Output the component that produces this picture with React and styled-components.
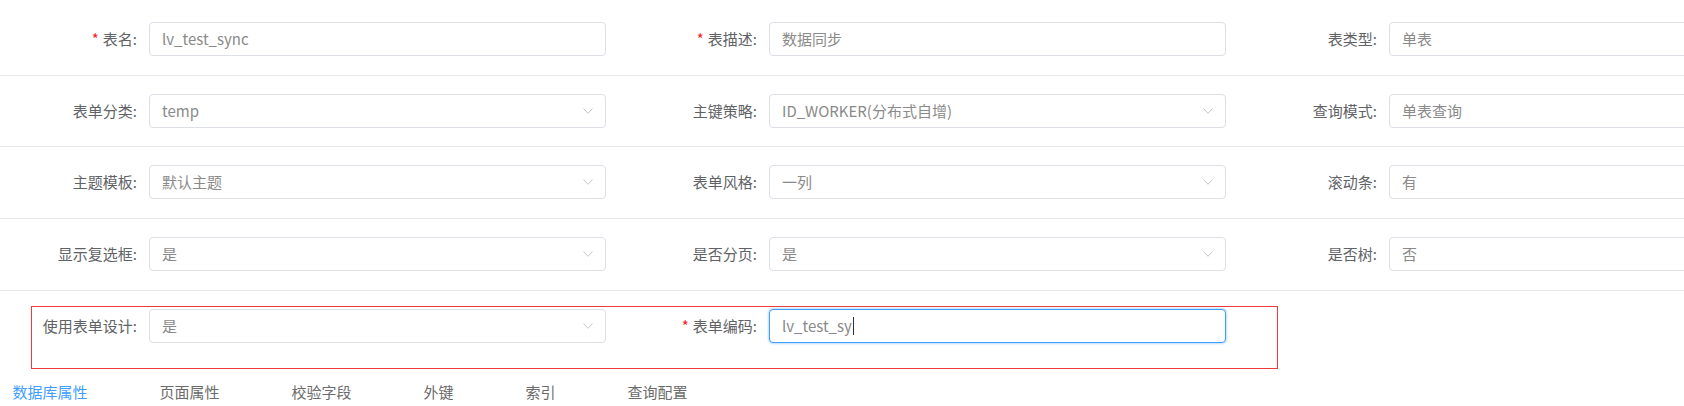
import React from "react";
import styled, { createGlobalStyle } from "styled-components";

const GlobalStyle = createGlobalStyle`
  html, body {
    margin: 0;
    padding: 0;
    background: #fff;
    overflow: hidden;
  }
  body {
    font-family: "Noto Sans CJK SC", "Liberation Sans", sans-serif;
    font-size: 15px;
    color: #606266;
  }
`;

const rows = [
  [
    { label: "表名", required: true, value: "lv_test_sync" },
    { label: "表描述", required: true, value: "数据同步" },
    { label: "表类型", value: "单表" },
  ],
  [
    { label: "表单分类", value: "temp", select: true },
    { label: "主键策略", value: "ID_WORKER(分布式自增)", select: true },
    { label: "查询模式", value: "单表查询" },
  ],
  [
    { label: "主题模板", value: "默认主题", select: true },
    { label: "表单风格", value: "一列", select: true },
    { label: "滚动条", value: "有" },
  ],
  [
    { label: "显示复选框", value: "是", select: true },
    { label: "是否分页", value: "是", select: true },
    { label: "是否树", value: "否" },
  ],
];

const lastRow = [
  { label: "使用表单设计", value: "是", select: true },
  { label: "表单编码", required: true, value: "lv_test_sy", focused: true },
];

const tabs = ["数据库属性", "页面属性", "校验字段", "外键", "索引", "查询配置"];

const Chevron = () => (
  <svg width="10" height="6" viewBox="0 0 10 6">
    <polyline
      points="0.5,0.5 5,5.3 9.5,0.5"
      fill="none"
      stroke="#c0c4cc"
      strokeWidth="1"
    />
  </svg>
);

const FormItemView = ({ item }) => (
  <FormItem>
    <Label>
      {item.required && <Star>*</Star>}
      {item.label}:
    </Label>
    <Field $focused={item.focused}>
      <FieldText>
        {item.value}
        {item.focused && <Caret />}
      </FieldText>
      {item.select && (
        <ArrowBox>
          <Chevron />
        </ArrowBox>
      )}
    </Field>
  </FormItem>
);

const App = () => {
  return (
    <>
      <GlobalStyle />
      <Page>
        {rows.map((row, i) => (
          <FormRow key={i} $first={i === 0}>
            <Grid>
              {row.map((item) => (
                <FormItemView key={item.label} item={item} />
              ))}
            </Grid>
          </FormRow>
        ))}
        <LastRow>
          <Highlight>
            <Grid>
              {lastRow.map((item) => (
                <FormItemView key={item.label} item={item} />
              ))}
            </Grid>
          </Highlight>
        </LastRow>
        <TabBar>
          {tabs.map((t, i) => (
            <Tab key={t} $active={i === 0}>
              {t}
            </Tab>
          ))}
        </TabBar>
      </Page>
    </>
  );
};

const Page = styled.div`
  padding-top: 4.3px;
  width: 100%;
`;

const FormRow = styled.div`
  padding: 18px 0 18.6px 32px;
  border-bottom: 1px solid #e8e8e8;
`;

const LastRow = styled.div`
  padding: 15.6px 0 0 31px;
`;

const Highlight = styled.div`
  box-sizing: border-box;
  width: 1247px;
  height: 63px;
  padding-top: 1.4px;
  border: 1px solid #ee3a3a;
`;

const Grid = styled.div`
  display: grid;
  grid-template-columns: repeat(3, 620px);
`;

const FormItem = styled.div`
  display: flex;
  align-items: center;
`;

const Label = styled.label`
  box-sizing: border-box;
  width: 117px;
  flex-shrink: 0;
  padding-right: 12px;
  text-align: right;
  line-height: 34px;
  color: #606266;
  white-space: nowrap;
`;

const Star = styled.span`
  color: #f5222d;
  margin-right: 4px;
`;

const Field = styled.div`
  box-sizing: border-box;
  width: 457px;
  height: 34px;
  flex-shrink: 0;
  display: flex;
  align-items: center;
  justify-content: space-between;
  padding: 0 12px;
  border: 1px solid ${(p) => (p.$focused ? "#409eff" : "#dcdfe6")};
  border-radius: 4px;
  background: #fff;
  box-shadow: ${(p) =>
    p.$focused ? "0 0 2px 1px rgba(64, 158, 255, 0.35)" : "none"};
`;

const FieldText = styled.span`
  display: flex;
  align-items: center;
  color: #8a8a8a;
  line-height: 34px;
  white-space: nowrap;
`;

const Caret = styled.span`
  display: inline-block;
  width: 1px;
  height: 18px;
  margin-left: 1px;
  background: #303133;
`;

const ArrowBox = styled.span`
  display: flex;
  align-items: center;
  margin-right: 0;
`;

const TabBar = styled.div`
  display: flex;
  gap: 72px;
  padding: 2.7px 0 0 12.5px;
`;

const Tab = styled.div`
  line-height: 40px;
  color: ${(p) => (p.$active ? "#409eff" : "#6b6b6b")};
  white-space: nowrap;
`;

export default App;
